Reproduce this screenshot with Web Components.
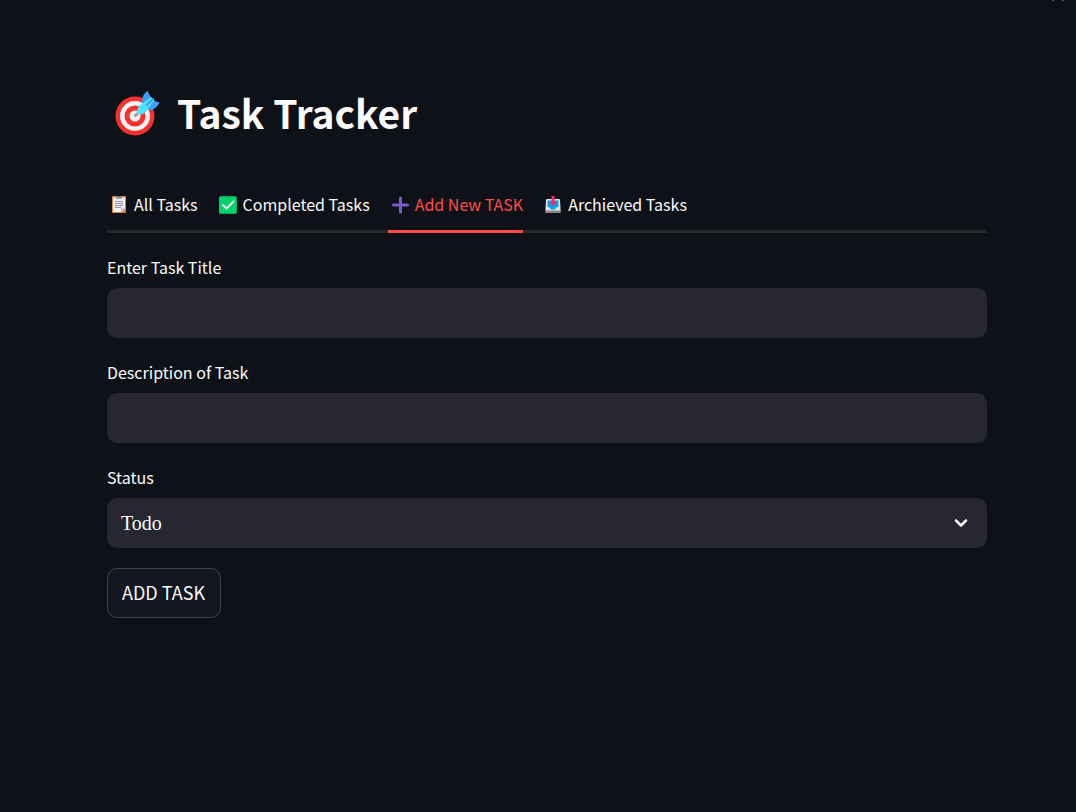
<!DOCTYPE html>
<html lang="en">
<head>
<meta charset="utf-8">
<meta name="viewport" content="width=device-width, initial-scale=1">
<title>Task Tracker</title>
<style>
  body {
    margin: 0;
    min-height: 100vh;
    background: #0e1117;
    color: #fafafa;
    font-family: "Noto Sans CJK SC", "Noto Sans", sans-serif;
    font-size: 16px;
    line-height: 24px;
  }
</style>
</head>
<body>
<task-app></task-app>

<script>
const ICONS = {
  target: `<svg viewBox="0 -1 48 48" aria-hidden="true">
    <circle cx="21" cy="26" r="19.500" fill="#f8312f"/><circle cx="21" cy="26" r="15" fill="#f4f4f4"/>
    <circle cx="21" cy="26" r="10.5" fill="#f8312f"/><circle cx="21" cy="26" r="5.5" fill="#f4f4f4"/>
    <path d="M21.500 25.500l4-4" stroke="#9b9b9b" stroke-width="3" stroke-linecap="round"/>
    <path d="M28 13.500C28 7 30 3 33.500 1L37 7.500 36 15zM33 19.500L39 10.500l6.500 2c-2 4.500-6 8-11.500 7.500z" fill="#3f9bfd"/>
    <path d="M23 24C22.500 20 24 16 28 14l9-7 3.500 3.500-7 9c-2 4-6 6-10.500 4.500z" fill="#50e2ff"/>
    <path d="M33 15l6-6" stroke="#3f9bfd" stroke-width="2" stroke-linecap="round"/></svg>`,
  clipboard: `<svg viewBox="0 -2 24 24" aria-hidden="true">
    <rect x="5" y="2" width="14" height="17" rx="1" fill="#d3883e"/>
    <path d="M6 3.500h12v11L14.500 18H6z" fill="#f3eef8"/>
    <path d="M14 18v-4h4z" fill="#cdc4d6"/><path d="M9 2h6v3H9z" fill="#9b9b9b"/><path d="M10 2h4v1h-4z" fill="#636363"/>
    <path d="M8 7.500h8M8 9.500h8M8 11.500h8M8 13.500h6" stroke="#998ea4"/></svg>`,
  check: `<svg viewBox="0 -2 24 24" aria-hidden="true">
    <rect x="3" y="2" width="18" height="18" rx="2" fill="#008463"/><rect x="3" y="2.500" width="17.500" height="17" rx="1.500" fill="#00d26a"/>
    <path d="M7 11l3.500 3.500L17.500 7.500" fill="none" stroke="#f4f4f4" stroke-width="1.800" stroke-linecap="round" stroke-linejoin="round"/></svg>`,
  plus: `<svg viewBox="0 -2 24 24" aria-hidden="true">
    <path d="M12.500 4v14M5.500 11h14" stroke="#7b5bc9" stroke-width="3" stroke-linecap="round"/></svg>`,
  inbox: `<svg viewBox="-1 -2 24 24" aria-hidden="true">
    <path d="M5 5h12q1 0 1 1l.5 8v4q0 1-1 1h-13q-1 0-1-1v-4L4 6q0-1 1-1z" fill="#e6e6e6"/>
    <path d="M5.500 6.500h11V13h-1.500l-2 2.500H9L7 13H5.500z" fill="#00a6ed"/>
    <path d="M4 16.500h14v1.500q0 1-1 1H5q-1 0-1-1z" fill="#858585"/>
    <path d="M9.500 2h3v6h2.500L11 12 7 8h2.500z" fill="#fb2566"/></svg>`
};

const define = (name, markup, setup) => {
  const template = document.createElement('template');
  template.innerHTML = markup;
  customElements.define(name, class extends HTMLElement {
    constructor() {
      super();
      this.attachShadow({ mode: 'open' }).append(template.content.cloneNode(true));
    }
    connectedCallback() {
      if (setup) setup(this, this.shadowRoot);
    }
  });
};

define('task-icon', `
  <style>
    :host { display: block; flex: none; width: 24px; height: 24px; }
    svg { display: block; width: 100%; height: 100%; }
  </style>`, (host, root) => {
  root.querySelector('svg')?.remove();
  root.append(document.createRange().createContextualFragment(ICONS[host.getAttribute('name')] || ''));
});

define('page-title', `
  <style>
    :host { display: block; }
    h1 { display: flex; align-items: flex-start; gap: 15px; margin: 0; padding-left: 7px;
         font-size: 39px; line-height: 46px; font-weight: 600; }
    task-icon { width: 48px; height: 48px; }
  </style>
  <h1><task-icon name="target"></task-icon><span><slot></slot></span></h1>`);

define('task-tab', `
  <style>
    :host { display: block; }
    button { display: flex; align-items: center; gap: 3px; height: 56px; margin: 0; padding: 0;
             border: 0; border-bottom: 3px solid transparent; background: none;
             color: inherit; font: inherit; white-space: nowrap; cursor: pointer; }
    :host([selected]) button { color: #ff4b4b; border-color: #ff4b4b; }
  </style>
  <button type="button" role="tab"><task-icon></task-icon><span><slot></slot></span></button>`,
(host, root) => {
  root.querySelector('task-icon').replaceWith(Object.assign(document.createElement('div'), {
    innerHTML: `<task-icon name="${host.getAttribute('icon')}"></task-icon>`
  }));
  root.querySelector('button').setAttribute('aria-selected', host.hasAttribute('selected'));
});

define('task-tabs', `
  <style>
    :host { display: flex; gap: 18px; box-shadow: inset 0 -3px #26282d; }
  </style>
  <slot></slot>`);

const FIELD_STYLE = `
  :host { display: grid; gap: 9px; }
  label { font-size: 16px; line-height: 24px; }
  input, select { box-sizing: border-box; display: block; width: 100%; height: 50px; margin: 0;
    padding: 0 14px; border: 0; border-radius: 10px; background: #262730; color: inherit; }`;

define('text-field', `
  <style>${FIELD_STYLE} input { font: inherit; }</style>
  <label for="field"><slot></slot></label>
  <input id="field" type="text">`);

define('status-field', `
  <style>${FIELD_STYLE}
    .box { position: relative; }
    select { appearance: none; font: 20px "Liberation Serif", serif; }
    svg { position: absolute; right: 18px; top: 17px; width: 16px; height: 16px; pointer-events: none; }
  </style>
  <label for="status"><slot></slot></label>
  <div class="box">
    <select id="status"><option>Todo</option></select>
    <svg viewBox="0 0 16 16" aria-hidden="true"><path d="M3 5.500l5 5 5-5" fill="none" stroke="#fafafa" stroke-width="2.500" stroke-linecap="round" stroke-linejoin="round"/></svg>
  </div>`);

define('task-button', `
  <style>
    :host { display: block; }
    button { height: 50px; margin: 0; padding: 0 15px 2px 14px; border: 1px solid #41444c; border-radius: 10px;
             background: #131720; color: inherit; font: inherit; font-size: 18px; cursor: pointer; }
  </style>
  <button type="button"><slot></slot></button>`);

define('page-menu', `
  <style>
    :host { position: absolute; top: 0; right: 12px; display: flex; gap: 8px; }
    i { width: 2px; height: 1px; background: #55575d; }
  </style>
  <i></i><i></i>`);

define('task-app', `
  <style>
    :host { display: block; }
    main { display: grid; padding: 89px 89px 64px 107px; }
    task-tabs { margin-top: 40px; }
    form { display: grid; gap: 22px; margin-top: 22px; }
    task-button { margin-top: -2px; }
  </style>
  <page-menu></page-menu>
  <main>
    <page-title>Task Tracker</page-title>
    <task-tabs role="tablist">
      <task-tab icon="clipboard">All Tasks</task-tab>
      <task-tab icon="check">Completed Tasks</task-tab>
      <task-tab icon="plus" selected>Add New TASK</task-tab>
      <task-tab icon="inbox">Archieved Tasks</task-tab>
    </task-tabs>
    <form>
      <text-field>Enter Task Title</text-field>
      <text-field>Description of Task</text-field>
      <status-field>Status</status-field>
      <task-button>ADD TASK</task-button>
    </form>
  </main>`);
</script>
</body>
</html>
